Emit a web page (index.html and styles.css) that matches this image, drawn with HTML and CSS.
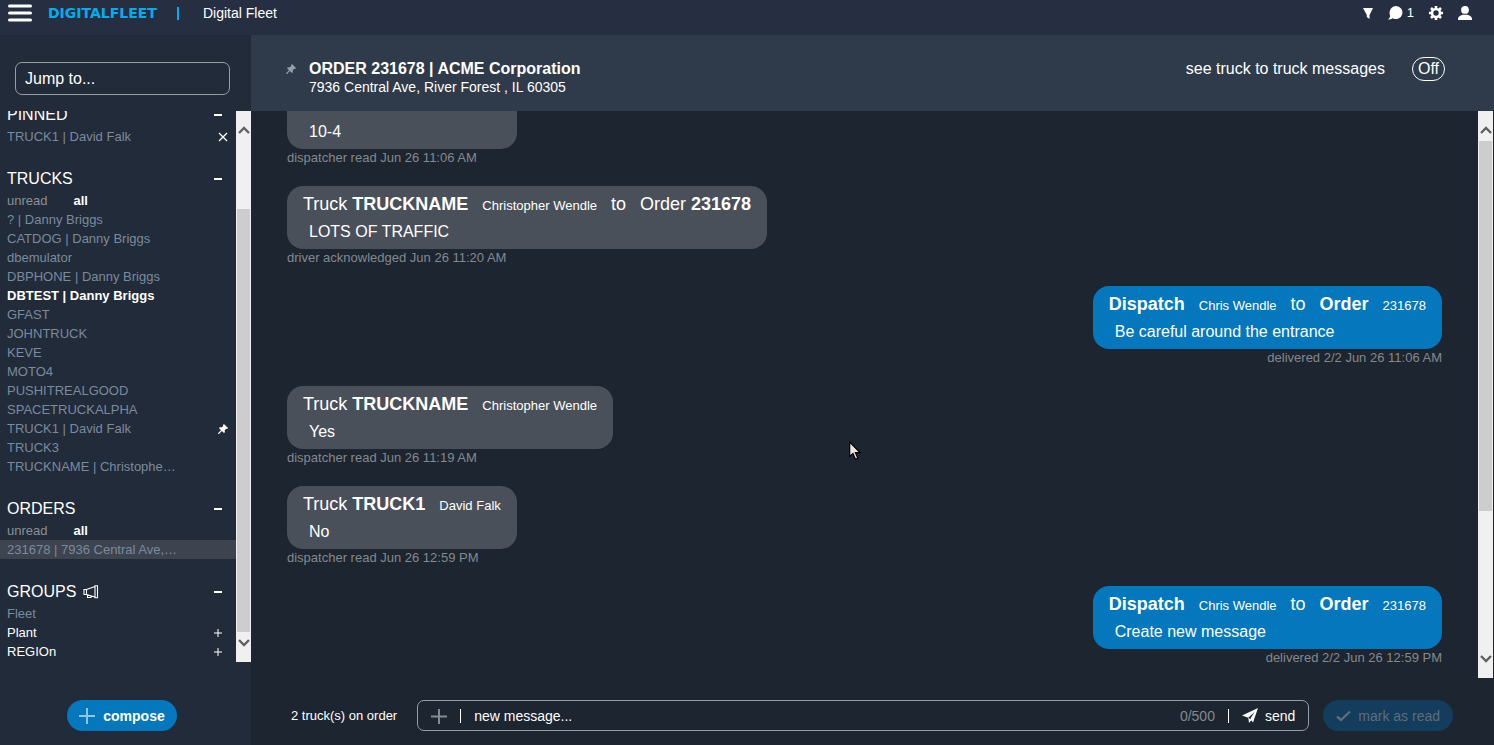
FILE: index.html
```html
<!DOCTYPE html>
<html lang="en">
<head>
    <meta charset="UTF-8">
    <meta name="viewport" content="width=device-width, initial-scale=1.0">
    <title>Digital Fleet</title>
    <link rel="stylesheet" href="styles.css">
</head>
<body>
    <!-- Shared icons -->
    <svg class="sprite" aria-hidden="true">
        <symbol id="pin" viewBox="0 0 16 16"><path d="M9.5 0 16 6.500 14.500 8 13 7.600 10.800 10 11 13 9.500 14.500 6.200 11.200 1.600 16 0 15.500 .3 14.400 4.800 9.800 1.500 6.500 3 5 6 5.200 8.400 3 8 1.500Z"/></symbol>
        <symbol id="minus" viewBox="0 0 10 10"><path d="M1 4h8v2H1z"/></symbol>
        <symbol id="plus" viewBox="0 0 10 10"><path d="M1 4.500h3.500V1h1v3.500H9v1H5.500V9h-1V5.500H1z"/></symbol>
        <symbol id="up" viewBox="0 0 12 8"><path d="M1 7 6 2l5 5" fill="none" stroke="#606060" stroke-width="2.400"/></symbol>
        <symbol id="down" viewBox="0 0 12 8"><path d="M1 1l5 5 5-5" fill="none" stroke="#606060" stroke-width="2.400"/></symbol>
    </svg>

    <!-- Top Bar -->
    <header class="topbar">
        <button class="menu-btn" aria-label="Menu">
            <svg width="24" height="18" viewBox="0 0 24 18"><path d="M1.500 2h21M1.500 9h21M1.500 16h21" stroke="#fff" stroke-width="3" stroke-linecap="round"/></svg>
        </button>
        <a href="#" class="logo">DIGITALFLEET</a>
        <span class="logo-bar"></span>
        <span class="company">Digital Fleet</span>
        <nav class="top-icons">
            <button aria-label="Filter"><svg width="10" height="12" viewBox="0 0 10 12"><path d="M0 1h10L6.500 8v4L3.800 10V8z"/></svg></button>
            <button class="chat-btn" aria-label="Messages"><svg width="15" height="14" viewBox="0 0 15 14"><path d="M8 0a6.500 6.500 0 1 1-3.200 12.200Q2.500 13.800 0 13.600 1.900 12 2.200 10 1.500 8.500 1.500 6.500A6.500 6.500 0 0 1 8 0z"/></svg><span>1</span></button>
            <button aria-label="Settings"><svg width="14" height="14" viewBox="0 0 14 14"><circle cx="7" cy="7" r="4" fill="none" stroke="#fff" stroke-width="2.600"/><path d="M7 0v3M7 11v3M0 7h3M11 7h3M2 2l2.200 2.200M9.800 9.800 12 12M12 2 9.800 4.200M4.200 9.800 2 12" stroke="#fff" stroke-width="2.600"/></svg></button>
            <button aria-label="Account"><svg width="14" height="14" viewBox="0 0 14 14"><ellipse cx="7" cy="3.900" rx="3.900" ry="3.900"/><path d="M0 14v-2Q1 9.800 4.600 8.800h4.800Q13 9.800 14 12v2z"/></svg></button>
        </nav>
    </header>

    <div class="layout">
        <!-- Sidebar -->
        <aside class="sidebar">
            <div class="jump">
                <input type="text" placeholder="Jump to..." aria-label="Jump to">
            </div>
            <div class="scroll-area">
                <div class="nav-list">
                    <section>
                        <h2>PINNED <button aria-label="Collapse"><svg><use href="#minus"/></svg></button></h2>
                        <div class="row"><a href="#">TRUCK1 | David Falk</a><button class="unpin" aria-label="Unpin"><svg viewBox="0 0 10 10"><path d="M1 1l8 8M9 1 1 9" stroke="#fff" stroke-width="1.300"/></svg></button></div>
                    </section>
                    <section>
                        <h2>TRUCKS <button aria-label="Collapse"><svg><use href="#minus"/></svg></button></h2>
                        <div class="filter"><a href="#">unread</a><a href="#" class="active">all</a></div>
                        <div class="row"><a href="#">? | Danny Briggs</a></div>
                        <div class="row"><a href="#">CATDOG | Danny Briggs</a></div>
                        <div class="row"><a href="#">dbemulator</a></div>
                        <div class="row"><a href="#">DBPHONE | Danny Briggs</a></div>
                        <div class="row new"><a href="#">DBTEST | Danny Briggs</a></div>
                        <div class="row"><a href="#">GFAST</a></div>
                        <div class="row"><a href="#">JOHNTRUCK</a></div>
                        <div class="row"><a href="#">KEVE</a></div>
                        <div class="row"><a href="#">MOTO4</a></div>
                        <div class="row"><a href="#">PUSHITREALGOOD</a></div>
                        <div class="row"><a href="#">SPACETRUCKALPHA</a></div>
                        <div class="row"><a href="#">TRUCK1 | David Falk</a><button class="unpin" aria-label="Pinned"><svg><use href="#pin"/></svg></button></div>
                        <div class="row"><a href="#">TRUCK3</a></div>
                        <div class="row"><a href="#">TRUCKNAME | Christophe…</a></div>
                    </section>
                    <section>
                        <h2>ORDERS <button aria-label="Collapse"><svg><use href="#minus"/></svg></button></h2>
                        <div class="filter"><a href="#">unread</a><a href="#" class="active">all</a></div>
                        <div class="row selected"><a href="#">231678 | 7936 Central Ave,…</a></div>
                    </section>
                    <section>
                        <h2>GROUPS
                            <svg class="horn" width="16" height="14" viewBox="0 0 16 14"><path d="M1 4.500h2.500v5H1zM3.500 4.500 12 1.500v10.500L3.500 9.500M12 .8h2.500v12H12zM4.500 10v2.500h3.500V11" fill="none" stroke="#fff" stroke-width="1.100"/></svg>
                            <button aria-label="Collapse"><svg><use href="#minus"/></svg></button></h2>
                        <div class="row"><a href="#">Fleet</a></div>
                        <div class="row group"><a href="#">Plant</a><button aria-label="Expand"><svg><use href="#plus"/></svg></button></div>
                        <div class="row group"><a href="#">REGIOn</a><button aria-label="Expand"><svg><use href="#plus"/></svg></button></div>
                    </section>
                </div>
                <div class="scrollbar side-bar">
                    <svg><use href="#up"/></svg>
                    <div class="track"><div class="thumb"></div></div>
                    <svg><use href="#down"/></svg>
                </div>
            </div>
            <div class="compose">
                <button>
                    <svg width="16" height="16" viewBox="0 0 16 16"><path d="M8 0v16M0 8h16" stroke="#8ec4e6" stroke-width="2"/></svg>
                    compose
                </button>
            </div>
        </aside>

        <!-- Conversation -->
        <main>
            <div class="order-head">
                <svg class="head-pin" width="10" height="10"><use href="#pin"/></svg>
                <div class="order-title">
                    <h1>ORDER 231678 | ACME Corporation</h1>
                    <p>7936 Central Ave, River Forest , IL 60305</p>
                </div>
                <label for="t2t">see truck to truck messages</label>
                <button id="t2t" class="toggle">Off</button>
            </div>

            <div class="scroll-area">
                <div class="messages">
                    <div class="message">
                        <div class="bubble">
                            <div class="from"><span>Truck <b>TRUCK1</b></span><small>David Falk</small></div>
                            <p>10-4</p>
                        </div>
                        <div class="status">dispatcher read Jun 26 11:06 AM</div>
                    </div>
                    <div class="message">
                        <div class="bubble">
                            <div class="from"><span>Truck <b>TRUCKNAME</b></span><small>Christopher Wendle</small><span>to</span><span>Order <b>231678</b></span></div>
                            <p>LOTS OF TRAFFIC</p>
                        </div>
                        <div class="status">driver acknowledged Jun 26 11:20 AM</div>
                    </div>
                    <div class="message sent">
                        <div class="bubble">
                            <div class="from"><b>Dispatch</b><small>Chris Wendle</small><span>to</span><b>Order</b><small>231678</small></div>
                            <p>Be careful around the entrance</p>
                        </div>
                        <div class="status">delivered 2/2 Jun 26 11:06 AM</div>
                    </div>
                    <div class="message">
                        <div class="bubble">
                            <div class="from"><span>Truck <b>TRUCKNAME</b></span><small>Christopher Wendle</small></div>
                            <p>Yes</p>
                        </div>
                        <div class="status">dispatcher read Jun 26 11:19 AM</div>
                    </div>
                    <div class="message">
                        <div class="bubble">
                            <div class="from"><span>Truck <b>TRUCK1</b></span><small>David Falk</small></div>
                            <p>No</p>
                        </div>
                        <div class="status">dispatcher read Jun 26 12:59 PM</div>
                    </div>
                    <div class="message sent">
                        <div class="bubble">
                            <div class="from"><b>Dispatch</b><small>Chris Wendle</small><span>to</span><b>Order</b><small>231678</small></div>
                            <p>Create new message</p>
                        </div>
                        <div class="status">delivered 2/2 Jun 26 12:59 PM</div>
                    </div>
                </div>
                <div class="scrollbar main-bar">
                    <svg><use href="#up"/></svg>
                    <div class="track"><div class="thumb"></div></div>
                    <svg><use href="#down"/></svg>
                </div>
            </div>

            <!-- Message Entry -->
            <form class="entry">
                <span class="count">2 truck(s) on order</span>
                <div class="entry-box">
                    <button type="button" aria-label="Add"><svg width="16" height="16" viewBox="0 0 16 16"><path d="M8 1v15M0 8.500h16" stroke="#858b93" stroke-width="2"/></svg></button>
                    <span class="divider"></span>
                    <input type="text" placeholder="new message..." aria-label="New message">
                    <span class="limit">0/500</span>
                    <span class="divider"></span>
                    <button type="button" class="send"><svg width="16" height="15" viewBox="0 0 16 15"><path d="M0 7.500 16 0 11 14.500 8.200 11 12.500 4 6.300 9.800z"/><path d="M6.300 9.800 9.500 12 7 15z"/></svg>send</button>
                </div>
                <button type="button" class="mark" disabled><svg width="15" height="12" viewBox="0 0 15 12"><path d="M1 6.500 5 10 14 1.500" fill="none" stroke="#5f6d7b" stroke-width="2.400"/></svg>mark as read</button>
            </form>
        </main>
    </div>

    <svg class="pointer" width="12" height="20" viewBox="0 0 12 20"><path d="M.7 1v14.500l3.300-3 2.400 5.700 2.400-1L6.400 11.700H11z" fill="#efe6df" stroke="#000" stroke-width="1.200"/></svg>
</body>
</html>
```
FILE: styles.css
```css
/* General Styling */
* {
    box-sizing: border-box;
}

body {
    margin: 0;
    height: 100vh;
    display: flex;
    flex-direction: column;
    font-family: "Liberation Sans", Arial, sans-serif;
    font-size: 13px;
    background-color: #1c2530;
    color: #fff;
    overflow: hidden;
}

h1, h2, p {
    margin: 0;
}

a {
    color: inherit;
    text-decoration: none;
}

button, input {
    font: inherit;
    color: inherit;
    background: none;
    border: none;
    padding: 0;
}

button {
    display: flex;
    align-items: center;
    cursor: pointer;
}

svg {
    fill: #fff;
    flex-shrink: 0;
}

input::placeholder {
    color: #fff;
    opacity: 1;
}

.sprite {
    position: absolute;
    width: 0;
    height: 0;
}

/* Top Bar */
.topbar {
    display: flex;
    align-items: center;
    height: 35px;
    padding: 0 22px 9px 8px;
    background-color: #262f42;
}

.logo {
    margin-left: 16px;
    font-family: "DejaVu Sans", sans-serif;
    font-size: 14px;
    font-weight: bold;
    color: #00aeef;
}

.logo-bar {
    width: 2px;
    height: 13px;
    margin: 0 24px 0 20px;
    background-color: #00aeef;
}

.company {
    font-size: 14px;
}

.top-icons {
    display: flex;
    align-items: center;
    gap: 15px;
    margin-left: auto;
}

.chat-btn {
    gap: 4px;
}

.chat-btn span {
    padding-bottom: 2px;
}

/* Layout */
.layout {
    flex: 1;
    display: flex;
    min-height: 0;
}

.sidebar {
    width: 251px;
    display: flex;
    flex-direction: column;
    background-color: #222b39;
}

main {
    flex: 1;
    display: flex;
    flex-direction: column;
    min-width: 0;
}

.scroll-area {
    flex: 1;
    display: flex;
    min-height: 0;
}

/* Scrollbars */
.scrollbar {
    width: 15px;
    display: flex;
    flex-direction: column;
    align-items: center;
    background-color: #f0f0f0;
}

.scrollbar svg {
    width: 12px;
    height: 8px;
    margin: 15px 0 7px;
}

.scrollbar svg:last-child {
    margin: 7px 0 15px;
}

.scrollbar .track {
    flex: 1;
    width: 13px;
}

.thumb {
    background-color: #cdcdcd;
}

.side-bar .track {
    padding-top: 68px;
}

.side-bar .thumb {
    height: 100%;
}

.main-bar {
    margin-right: 1px;
}

.main-bar .thumb {
    height: 73%;
}

/* Sidebar */
.jump {
    padding: 27px 21px 16px 15px;
}

.jump input {
    width: 100%;
    height: 33px;
    padding: 0 9px;
    border: 1px solid #9a9da3;
    border-radius: 7px;
    font-size: 16px;
}

.nav-list {
    flex: 1;
    display: flex;
    flex-direction: column;
    justify-content: flex-end;
    gap: 21px;
    padding-bottom: 1px;
    overflow: hidden;
}

.nav-list h2 {
    display: flex;
    align-items: center;
    height: 24px;
    padding: 0 13px 0 7px;
    font-size: 16px;
    font-weight: normal;
}

.nav-list button {
    margin-left: auto;
}

.nav-list button svg {
    width: 10px;
    height: 10px;
}

.horn {
    margin-left: 7px;
}

.row, .filter {
    display: flex;
    align-items: center;
    height: 19px;
    padding: 0 13px 0 7px;
    color: #7a8a9f;
}

.row .unpin {
    margin-right: -5px;
}

.row.new {
    color: #fff;
    font-weight: bold;
}

.row.group {
    color: #fff;
}

.row.selected {
    background-color: #3d4450;
}

.filter {
    gap: 26px;
    color: #8d9096;
}

.filter .active {
    color: #fff;
    font-weight: bold;
}

.compose {
    display: flex;
    justify-content: center;
    padding: 38px 7px 14px 0;
}

.compose button {
    gap: 8px;
    height: 31px;
    padding: 0 12px;
    border-radius: 16px;
    background-color: #0477bd;
    font-size: 14px;
    font-weight: bold;
}

/* Order Header */
.order-head {
    display: flex;
    align-items: center;
    height: 76px;
    padding: 0 49px 8px 35px;
    background-color: #2f3a4a;
}

.head-pin {
    margin-right: 13px;
    fill: #9a9fa7;
}

.order-title {
    padding-top: 16px;
}

.order-head h1 {
    font-size: 16px;
    line-height: 20px;
}

.order-head p {
    font-size: 14px;
    line-height: 17px;
}

.order-head label {
    margin-left: auto;
    margin-right: 27px;
    font-size: 16px;
}

.toggle {
    height: 24px;
    padding: 0 5px;
    border: 1px solid #fff;
    border-radius: 12px;
    font-size: 16px;
}

/* Messages */
.messages {
    flex: 1;
    display: flex;
    flex-direction: column;
    justify-content: flex-end;
    gap: 20px;
    padding: 0 36px 12px;
    overflow: hidden;
}

.message {
    display: flex;
    flex-direction: column;
    align-items: flex-start;
}

.message.sent {
    align-items: flex-end;
}

.bubble {
    height: 63px;
    padding: 7px 16px;
    border-radius: 16px;
    background-color: #4a505a;
}

.sent .bubble {
    background-color: #0477bd;
}

.from {
    display: flex;
    align-items: baseline;
    gap: 14px;
    font-size: 18px;
    line-height: 22px;
}

.from small {
    font-size: 13px;
}

.bubble p {
    padding: 5px 6px 0;
    font-size: 16px;
    line-height: 20px;
}

.status {
    line-height: 17px;
    color: #85898f;
}

/* Message Entry */
.entry {
    display: flex;
    align-items: center;
    padding: 22px 41px 14px 40px;
}

.entry-box {
    flex: 1;
    display: flex;
    align-items: center;
    gap: 13px;
    height: 31px;
    margin: 0 14px 0 20px;
    padding: 0 13px;
    border: 1px solid #9a9da3;
    border-radius: 7px;
    font-size: 14px;
}

.divider {
    width: 1px;
    height: 14px;
    background-color: #fff;
}

.entry-box input {
    flex: 1;
    min-width: 0;
}

.limit {
    color: #85898f;
}

.send {
    gap: 7px;
}

.mark {
    gap: 7px;
    height: 31px;
    padding: 0 13px;
    border-radius: 16px;
    background-color: #143c5c;
    color: #5f6d7b;
    font-size: 14px;
}

/* Mouse pointer over the conversation */
.pointer {
    position: absolute;
    left: 849px;
    top: 441px;
}
```
